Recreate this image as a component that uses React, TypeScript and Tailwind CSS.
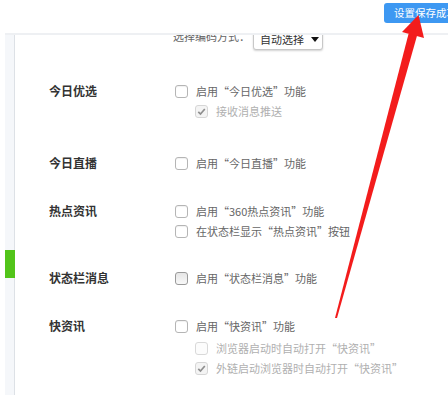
import React from "react";

type BoxKind = "normal" | "dark" | "disabled" | "disabledChecked";

function Box({ kind }: { kind: BoxKind }) {
  if (kind === "disabledChecked") {
    return (
      <span className="flex h-[13px] w-[13px] flex-none items-center justify-center rounded-[3px] border border-[#d6d6d6] bg-[#f4f4f4]">
        <svg width="9" height="9" viewBox="0 0 9 9">
          <path d="M1.3 4.8 L3.5 7 L7.8 2" fill="none" stroke="#8f8f8f" strokeWidth="1.7" />
        </svg>
      </span>
    );
  }
  if (kind === "disabled") {
    return <span className="h-[13px] w-[13px] flex-none rounded-[3px] border border-[#d9d9d9] bg-[#fcfcfc]" />;
  }
  if (kind === "dark") {
    return <span className="h-[13px] w-[13px] flex-none rounded-[3px] border border-[#9a9a9a] bg-gradient-to-b from-[#e6e6e6] to-[#f8f8f8]" />;
  }
  return <span className="h-[13px] w-[13px] flex-none rounded-[3px] border border-[#b5b5b5] bg-white shadow-[inset_0_1px_1px_rgba(0,0,0,0.06)]" />;
}

function Opt({ kind = "normal", text, sub = false }: { kind?: BoxKind; text: string; sub?: boolean }) {
  return (
    <div className={sub ? "ml-[20px] flex h-[20px] items-center gap-[8px]" : "flex h-[20px] items-center gap-[8px]"}>
      <Box kind={kind} />
      <span className={sub ? "whitespace-nowrap text-[11px] text-[#b0b0b0]" : "whitespace-nowrap text-[11px] text-[#666]"}>{text}</span>
    </div>
  );
}

function Group({ label, className, children }: { label: string; className: string; children: React.ReactNode }) {
  return (
    <div className={"flex " + className}>
      <div className="h-[20px] w-[126px] flex-none text-[12px] font-bold leading-[20px] text-[#333]">{label}</div>
      <div className="flex flex-col">{children}</div>
    </div>
  );
}

export default function App() {
  return (
    <div
      className="relative h-[395px] w-[448px] overflow-hidden bg-white"
      style={{ fontFamily: '"Noto Sans CJK SC", "Noto Sans", sans-serif' }}
    >
      <header className="flex h-[33px]">
        <button className="ml-[384px] mt-[3px] h-[20px] flex-none whitespace-nowrap rounded-[3px] bg-[#3d98f2] px-[10px] text-[10.5px] leading-[20px] text-white">
          设置保存成功
        </button>
      </header>
      <div className="ml-[5px] flex h-[362px] border-t-2 border-[#eef0f3]">
        <aside className="flex w-[10px] flex-none flex-col border-r border-[#dde1e6] bg-[#f5f7fa]">
          <div className="h-[215px]" />
          <div className="h-[28px] w-[10px] bg-[#52c41a]" />
        </aside>
        <main className="flex-1 overflow-hidden">
          <div className="-mt-[6px] flex flex-col pl-[34px]">
            <div className="ml-[124px] flex h-[21px] items-center gap-[3px]">
              <span className="mb-[6px] whitespace-nowrap text-[11px] text-[#666]">选择编码方式：</span>
              <div className="flex h-[21px] items-center gap-[7px] rounded-[3px] border border-[#c8c8c8] bg-white pl-[6px] pr-[3px] shadow-[0_1px_2px_rgba(0,0,0,0.18)]">
                <span className="whitespace-nowrap text-[11px] text-[#333]">自动选择</span>
                <span className="h-0 w-0 border-x-[4px] border-t-[5px] border-x-transparent border-t-[#111]" />
              </div>
            </div>
            <Group label="今日优选" className="mt-[31px]">
              <Opt text="启用“今日优选”功能" />
              <Opt sub kind="disabledChecked" text="接收消息推送" />
            </Group>
            <Group label="今日直播" className="mt-[32px]">
              <Opt text="启用“今日直播”功能" />
            </Group>
            <Group label="热点资讯" className="mt-[28px]">
              <Opt text="启用“360热点资讯”功能" />
              <Opt text="在状态栏显示“热点资讯”按钮" />
            </Group>
            <Group label="状态栏消息" className="mt-[27px]">
              <Opt kind="dark" text="启用“状态栏消息”功能" />
            </Group>
            <Group label="快资讯" className="mt-[28px]">
              <Opt text="启用“快资讯”功能" />
              <div className="mt-[2px]">
                <Opt sub kind="disabled" text="浏览器启动时自动打开“快资讯”" />
              </div>
              <Opt sub kind="disabledChecked" text="外链启动浏览器时自动打开“快资讯”" />
            </Group>
          </div>
        </main>
      </div>
      <svg className="pointer-events-none absolute left-0 top-0" width="448" height="395" viewBox="0 0 448 395">
        <polygon points="408.5,34 417.5,34 337,318 335,318" fill="#f31c1c" />
        <polygon points="418.5,15 402,32 424,38" fill="#f31c1c" />
      </svg>
    </div>
  );
}
